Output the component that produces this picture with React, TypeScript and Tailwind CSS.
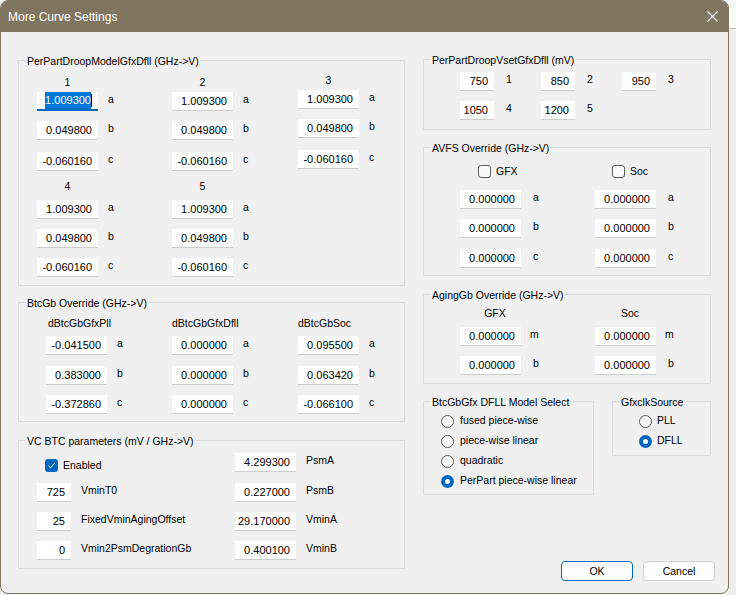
import type { ReactNode } from 'react'

function Edit({ v, narrow, focus }: { v: string; narrow?: boolean; focus?: boolean }) {
  return (
    <div
      className={`h-[19px] ${narrow ? 'w-[34px]' : 'w-[61px]'} shrink-0 bg-white text-right text-[11px] pr-[6px] ${
        focus ? 'border-b-2 border-[#0067c0] leading-[17px]' : 'border-b border-[#cdcdcd] leading-[18px]'
      }`}
    >
      {focus ? (
        <span className="inline-flex items-center">
          <span className="bg-[#0078d7] text-white">{v}</span>
          <span className="w-px h-[13px] bg-black" />
        </span>
      ) : (
        v
      )}
    </div>
  )
}

function Cell({
  v,
  l,
  cls = '',
  lcls = 'ml-[10px]',
  narrow,
  focus,
}: {
  v: string
  l: string
  cls?: string
  lcls?: string
  narrow?: boolean
  focus?: boolean
}) {
  return (
    <div className={`flex items-start ${cls}`}>
      <Edit v={v} narrow={narrow} focus={focus} />
      <span className={`${lcls} leading-[14px] whitespace-nowrap`}>{l}</span>
    </div>
  )
}

function Group({ title, className, children }: { title: string; className: string; children?: ReactNode }) {
  return (
    <div className={`border border-[#dcdcdc] shrink-0 ${className}`}>
      <div className="-mt-[7px] ml-[7px] w-fit px-[1px] bg-[#f0f0f0] leading-[14px] whitespace-nowrap">{title}</div>
      {children}
    </div>
  )
}

function CheckBox({ checked }: { checked?: boolean }) {
  if (checked) {
    return (
      <div className="w-[13px] h-[13px] rounded-[3px] bg-[#0067c0] flex items-center justify-center shrink-0">
        <svg width="9" height="9" viewBox="0 0 9 9" fill="none">
          <path d="M1.5 4.8 L3.6 6.8 L7.6 2.2" stroke="white" strokeWidth="1" strokeLinecap="round" strokeLinejoin="round" />
        </svg>
      </div>
    )
  }
  return <div className="w-[13px] h-[13px] rounded-[3px] border border-[#5d5d5d] bg-[#f8f8f8] shrink-0" />
}

function Radio({ label, checked, gap = 'ml-[6px]' }: { label: string; checked?: boolean; gap?: string }) {
  return (
    <div className="h-[20px] flex items-center">
      {checked ? (
        <div className="w-[13px] h-[13px] rounded-full bg-[#0067c0] flex items-center justify-center shrink-0">
          <div className="w-[5px] h-[5px] rounded-full bg-white" />
        </div>
      ) : (
        <div className="w-[13px] h-[13px] rounded-full border border-[#595959] bg-[#fafafa] shrink-0" />
      )}
      <span className={`${gap} whitespace-nowrap`}>{label}</span>
    </div>
  )
}

function DroopCol({ head, w, mts, focus }: { head: string; w: string; mts: string[]; focus?: boolean }) {
  return (
    <div className={w}>
      <div className="w-[61px] text-center leading-[14px]">{head}</div>
      <Cell v="1.009300" l="a" cls={mts[0]} focus={focus} />
      <Cell v="0.049800" l="b" cls={mts[1]} />
      <Cell v="-0.060160" l="c" cls={mts[2]} />
    </div>
  )
}

export default function App() {
  const top = ['mt-[3px]', 'mt-[10px]', 'mt-[12px]']
  const bottom = ['mt-[7px]', 'mt-[10px]', 'mt-[10px]']
  return (
    <div className="w-[736px] h-[595px] flex bg-[#f0f0f0] font-['Liberation_Sans',Arial,sans-serif] text-[10.5px] text-black overflow-hidden">
      <div className="w-[729px] h-[594px] shrink-0 flex flex-col bg-[#f0f0f0] border border-[#7f7560] rounded-[8px] overflow-hidden">
        {/* Title bar */}
        <div className="h-[31px] shrink-0 bg-[#7f7560] flex items-center justify-between pl-[7px] pr-[10px] text-white text-[12px]">
          <span>More Curve Settings</span>
          <svg width="11" height="11" viewBox="0 0 11 11">
            <path d="M0.5 0.5 L10.5 10.5 M10.5 0.5 L0.5 10.5" stroke="white" strokeWidth="1.1" />
          </svg>
        </div>

        <div className="flex pl-[17px]">
          {/* Left column */}
          <div className="w-[387px] pt-[28px] flex flex-col">
            <Group title="PerPartDroopModelGfxDfll (GHz->V)" className="h-[226px]">
              <div className="flex pl-[18px] mt-[7px]">
                <DroopCol head="1" w="w-[135px]" mts={top} focus />
                <DroopCol head="2" w="w-[126px]" mts={top} />
                <div className="-mt-[2px]">
                  <DroopCol head="3" w="w-[80px]" mts={top} />
                </div>
              </div>
              <div className="flex pl-[18px] mt-[8px]">
                <DroopCol head="4" w="w-[135px]" mts={bottom} />
                <DroopCol head="5" w="w-[126px]" mts={bottom} />
              </div>
            </Group>

            <Group title="BtcGb Override (GHz->V)" className="mt-[16px] h-[120px]">
              <div className="flex pl-[27px] mt-[6px]">
                <div className="w-[126px]">
                  <div className="leading-[14px] pl-[2px]">dBtcGbGfxPll</div>
                  <Cell v="-0.041500" l="a" cls="mt-[6px]" />
                  <Cell v="0.383000" l="b" cls="mt-[11px]" />
                  <Cell v="-0.372860" l="c" cls="mt-[10px]" />
                </div>
                <div className="w-[126px]">
                  <div className="leading-[14px]">dBtcGbGfxDfll</div>
                  <Cell v="0.000000" l="a" cls="mt-[6px]" />
                  <Cell v="0.000000" l="b" cls="mt-[11px]" />
                  <Cell v="0.000000" l="c" cls="mt-[10px]" />
                </div>
                <div>
                  <div className="leading-[14px]">dBtcGbSoc</div>
                  <Cell v="0.095500" l="a" cls="mt-[6px]" />
                  <Cell v="0.063420" l="b" cls="mt-[11px]" />
                  <Cell v="-0.066100" l="c" cls="mt-[10px]" />
                </div>
              </div>
            </Group>

            <Group title="VC BTC parameters (mV / GHz->V)" className="mt-[18px] h-[129px]">
              <div className="flex pl-[18px]">
                <div className="w-[198px]">
                  <div className="mt-[11px] h-[13px] flex items-center pl-[8px]">
                    <CheckBox checked />
                    <span className="ml-[5px]">Enabled</span>
                  </div>
                  <Cell v="725" l="VminT0" narrow cls="mt-[11px]" />
                  <Cell v="25" l="FixedVminAgingOffset" narrow cls="mt-[10px]" />
                  <Cell v="0" l="Vmin2PsmDegrationGb" narrow cls="mt-[10px]" />
                </div>
                <div>
                  <Cell v="4.299300" l="PsmA" cls="mt-[5px]" />
                  <Cell v="0.227000" l="PsmB" cls="mt-[11px]" />
                  <Cell v="29.170000" l="VminA" cls="mt-[10px]" />
                  <Cell v="0.400100" l="VminB" cls="mt-[10px]" />
                </div>
              </div>
            </Group>
          </div>

          {/* Right column */}
          <div className="w-[292px] ml-[18px] pt-[27px] flex flex-col">
            <Group title="PerPartDroopVsetGfxDfll (mV)" className="w-[288px] h-[71px]">
              <div className="flex pl-[36px] mt-[5px]">
                <div className="w-[81px]"><Cell v="750" l="1" narrow lcls="ml-[12px]" /></div>
                <div className="w-[81px]"><Cell v="850" l="2" narrow lcls="ml-[12px]" /></div>
                <Cell v="950" l="3" narrow lcls="ml-[12px]" />
              </div>
              <div className="flex pl-[36px] mt-[10px]">
                <div className="w-[81px]"><Cell v="1050" l="4" narrow lcls="ml-[12px]" /></div>
                <Cell v="1200" l="5" narrow lcls="ml-[12px]" />
              </div>
            </Group>

            <Group title="AVFS Override (GHz->V)" className="w-[288px] mt-[17px] h-[129px]">
              <div className="flex pl-[36px] mt-[10px]">
                <div className="w-[135px] pl-[18px] h-[13px] flex items-center">
                  <CheckBox />
                  <span className="ml-[5px]">GFX</span>
                </div>
                <div className="pl-[17px] h-[13px] flex items-center">
                  <CheckBox />
                  <span className="ml-[5px]">Soc</span>
                </div>
              </div>
              <div className="flex pl-[36px] mt-[12px]">
                <div className="w-[135px]"><Cell v="0.000000" l="a" lcls="ml-[12px]" /></div>
                <Cell v="0.000000" l="a" lcls="ml-[12px]" />
              </div>
              <div className="flex pl-[36px] mt-[10px]">
                <div className="w-[135px]"><Cell v="0.000000" l="b" lcls="ml-[12px]" /></div>
                <Cell v="0.000000" l="b" lcls="ml-[12px]" />
              </div>
              <div className="flex pl-[36px] mt-[11px]">
                <div className="w-[135px]"><Cell v="0.000000" l="c" lcls="ml-[12px]" /></div>
                <Cell v="0.000000" l="c" lcls="ml-[12px]" />
              </div>
            </Group>

            <Group title="AgingGb Override (GHz->V)" className="w-[288px] mt-[18px] h-[90px]">
              <div className="flex pl-[36px] mt-[4px] leading-[14px]">
                <div className="w-[135px]"><div className="w-[70px] text-center">GFX</div></div>
                <div className="w-[70px] text-center">Soc</div>
              </div>
              <div className="flex pl-[36px] mt-[7px]">
                <div className="w-[135px]"><Cell v="0.000000" l="m" lcls="ml-[9px]" /></div>
                <Cell v="0.000000" l="m" lcls="ml-[9px]" />
              </div>
              <div className="flex pl-[36px] mt-[10px]">
                <div className="w-[135px]"><Cell v="0.000000" l="b" lcls="ml-[12px]" /></div>
                <Cell v="0.000000" l="b" lcls="ml-[12px]" />
              </div>
            </Group>

            <div className="flex items-start mt-[17px]">
              <Group title="BtcGbGfx DFLL Model Select" className="w-[171px] h-[94px]">
                <div className="mt-[2px] pl-[17px]">
                  <Radio label="fused piece-wise" />
                  <Radio label="piece-wise linear" />
                  <Radio label="quadratic" />
                  <Radio label="PerPart piece-wise linear" checked />
                </div>
              </Group>
              <Group title="GfxclkSource" className="ml-[18px] w-[99px] h-[55px]">
                <div className="mt-[2px] pl-[26px]">
                  <Radio label="PLL" gap="ml-[5px]" />
                  <Radio label="DFLL" checked gap="ml-[5px]" />
                </div>
              </Group>
            </div>

            <div className="flex justify-end mt-[66px] gap-[10px]">
              <button className="w-[72px] h-[20px] rounded-[4px] border border-[#0067c0] bg-[#fdfdfd] text-[10.5px] leading-[18px]">
                OK
              </button>
              <button className="w-[72px] h-[20px] rounded-[4px] border border-[#d0d0d0] bg-[#fdfdfd] text-[10.5px] leading-[18px]">
                Cancel
              </button>
            </div>
          </div>
        </div>
      </div>

      {/* Area behind the dialog */}
      <div className="flex-1 flex flex-col">
        <div className="h-[29px] bg-[#f8f8f8] border-b border-[#c4c4c4]" />
        <div className="flex-1 bg-[#eeeeee]" />
      </div>
    </div>
  )
}
